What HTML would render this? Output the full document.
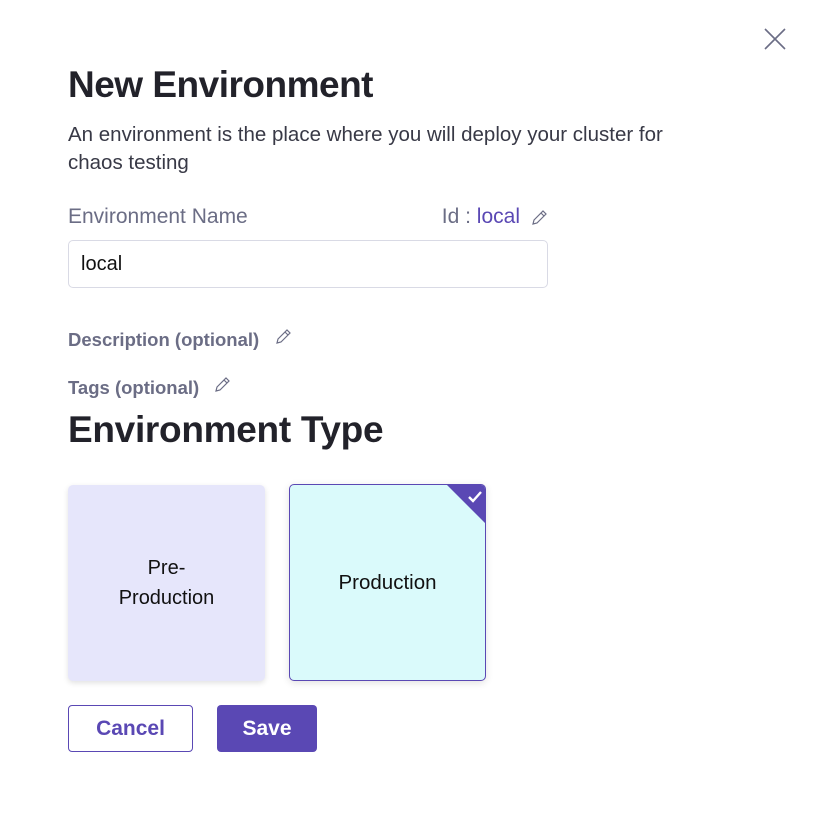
<!DOCTYPE html>
<html><head><style>
body{margin:0;width:816px;height:834px;background:#fff;font-family:"Liberation Sans",sans-serif;position:relative;overflow:hidden}
.a{position:absolute}
.pen{position:absolute;width:18px;height:18px}
</style></head><body>
<svg class="a" style="left:764px;top:28px" width="22" height="22" viewBox="0 0 22 22"><path d="M1 1L21 21M21 1L1 21" stroke="#6b6d85" stroke-width="1.6" fill="none"/></svg>
<div class="a" style="left:68px;top:64px;font-size:37px;font-weight:bold;color:#22222a;letter-spacing:-0.5px">New Environment</div>
<div class="a" style="left:68px;top:121px;width:655px;font-size:20.5px;line-height:28px;color:#383946">An environment is the place where you will deploy your cluster for chaos testing</div>
<div class="a" style="left:68px;top:205px;font-size:21px;color:#6b6d85">Environment Name</div>
<div class="a" style="right:296px;top:205px;font-size:21px;color:#6b6d85">Id : <span style="color:#5a48b4">local</span></div>
<svg class="pen" style="left:530px;top:209px" viewBox="0 0 18 18"><path d="M3 15l1-4L13 2l3 3-9 9z M11 4l3 3" stroke="#6b6d85" stroke-width="1.2" fill="none"/></svg>
<div class="a" style="left:68px;top:240px;width:478px;height:46px;border:1px solid #d9dae5;border-radius:5px"></div>
<div class="a" style="left:81px;top:253px;font-size:20px;color:#111">local</div>
<div class="a" style="left:68px;top:329px;font-size:18.5px;font-weight:bold;color:#6b6d85">Description (optional)</div>
<svg class="pen" style="left:274px;top:328px" viewBox="0 0 18 18"><path d="M3 15l1-4L13 2l3 3-9 9z M11 4l3 3" stroke="#6b6d85" stroke-width="1.2" fill="none"/></svg>
<div class="a" style="left:68px;top:377px;font-size:18.5px;font-weight:bold;color:#6b6d85">Tags (optional)</div>
<svg class="pen" style="left:213px;top:376px" viewBox="0 0 18 18"><path d="M3 15l1-4L13 2l3 3-9 9z M11 4l3 3" stroke="#6b6d85" stroke-width="1.2" fill="none"/></svg>
<div class="a" style="left:68px;top:409px;font-size:37px;font-weight:bold;color:#22222a;letter-spacing:-0.3px">Environment Type</div>
<div class="a" style="left:68px;top:485px;width:197px;height:196px;background:#e6e6fb;border-radius:5px;box-shadow:0 2px 6px rgba(0,0,0,.12);display:flex;align-items:center;justify-content:center;text-align:center;font-size:20px;line-height:30px;color:#111">Pre-<br>Production</div>
<div class="a" style="left:289px;top:484px;width:195px;height:195px;background:#dafafb;border:1px solid #5a48b4;border-radius:5px;box-shadow:0 2px 8px rgba(0,0,0,.12);display:flex;align-items:center;justify-content:center;font-size:20.5px;color:#111;overflow:hidden">Production
<div class="a" style="right:0;top:0;width:0;height:0;border-top:38px solid #5a48b4;border-left:38px solid transparent"></div>
<svg class="a" style="right:3px;top:6px" width="14" height="12" viewBox="0 0 14 12"><path d="M1 6l4 4 8-9" stroke="#fff" stroke-width="2.4" fill="none"/></svg></div>
<div class="a" style="left:68px;top:705px;width:125px;height:47px;border:1px solid #5a48b4;border-radius:4px;box-sizing:border-box;display:flex;align-items:center;justify-content:center;font-size:21px;font-weight:bold;color:#5a48b4">Cancel</div>
<div class="a" style="left:217px;top:705px;width:100px;height:47px;background:#5a48b4;border-radius:4px;display:flex;align-items:center;justify-content:center;font-size:21px;font-weight:bold;color:#fff">Save</div>
</body></html>
